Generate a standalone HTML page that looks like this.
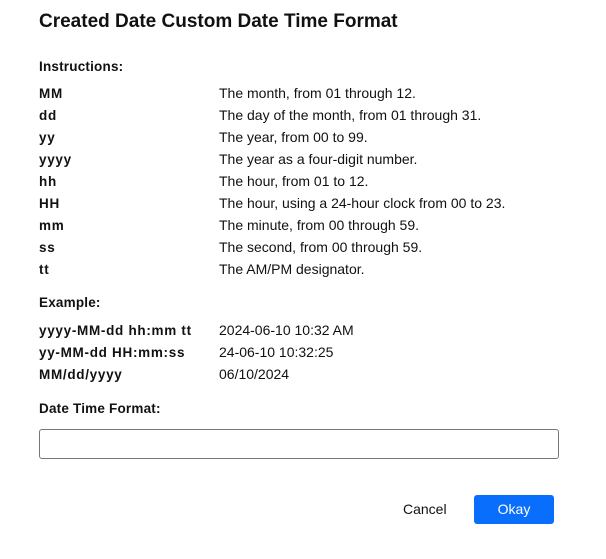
<!DOCTYPE html>
<html><head><style>
body{margin:0;width:606px;height:559px;background:#fff;font-family:"Liberation Sans",sans-serif;color:#111;position:relative;overflow:hidden}
div{position:absolute;white-space:nowrap;font-size:14px;line-height:16px}
.b{font-weight:bold;font-size:13.5px;letter-spacing:0.7px;margin-top:1px}
</style></head><body>
<div style="left:39px;top:10px;font-size:19px;line-height:24px;font-weight:bold">Created Date Custom Date Time Format</div>
<div class="b" style="left:39px;top:58px;letter-spacing:0.2px">Instructions:</div>
<div class="b" style="left:39px;top:85px">MM</div><div style="left:219px;top:85px">The month, from 01 through 12.</div>
<div class="b" style="left:39px;top:107px">dd</div><div style="left:219px;top:107px">The day of the month, from 01 through 31.</div>
<div class="b" style="left:39px;top:129px">yy</div><div style="left:219px;top:129px">The year, from 00 to 99.</div>
<div class="b" style="left:39px;top:151px">yyyy</div><div style="left:219px;top:151px">The year as a four-digit number.</div>
<div class="b" style="left:39px;top:173px">hh</div><div style="left:219px;top:173px">The hour, from 01 to 12.</div>
<div class="b" style="left:39px;top:195px">HH</div><div style="left:219px;top:195px">The hour, using a 24-hour clock from 00 to 23.</div>
<div class="b" style="left:39px;top:217px">mm</div><div style="left:219px;top:217px">The minute, from 00 through 59.</div>
<div class="b" style="left:39px;top:239px">ss</div><div style="left:219px;top:239px">The second, from 00 through 59.</div>
<div class="b" style="left:39px;top:261px">tt</div><div style="left:219px;top:261px">The AM/PM designator.</div>
<div class="b" style="left:39px;top:294px;letter-spacing:0.2px">Example:</div>
<div class="b" style="left:39px;top:322px">yyyy-MM-dd hh:mm tt</div><div style="left:219px;top:322px">2024-06-10 10:32 AM</div>
<div class="b" style="left:39px;top:344px">yy-MM-dd HH:mm:ss</div><div style="left:219px;top:344px">24-06-10 10:32:25</div>
<div class="b" style="left:39px;top:366px">MM/dd/yyyy</div><div style="left:219px;top:366px">06/10/2024</div>
<div class="b" style="left:39px;top:400px;letter-spacing:0.2px">Date Time Format:</div>
<div style="left:39px;top:429px;width:518px;height:28px;border:1px solid #777;border-radius:3px"></div>
<div style="left:403px;top:501px;font-size:14px">Cancel</div>
<div style="left:474px;top:495px;width:80px;height:29px;background:#0a6efd;border-radius:3px;color:#fff;font-size:14px;line-height:29px;text-align:center">Okay</div>
</body></html>
